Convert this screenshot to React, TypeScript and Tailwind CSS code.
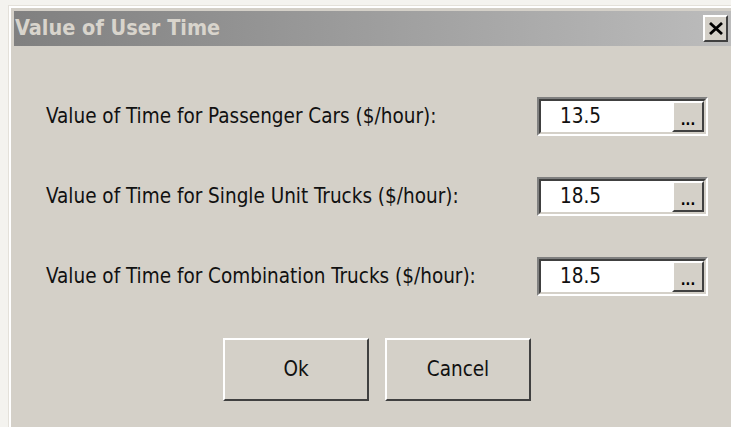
const FONT = "font-['DejaVu_Sans_Condensed','DejaVu_Sans',sans-serif]";

const rows = [
  { label: 'Value of Time for Passenger Cars ($/hour):', value: '13.5' },
  { label: 'Value of Time for Single Unit Trucks ($/hour):', value: '18.5' },
  { label: 'Value of Time for Combination Trucks ($/hour):', value: '18.5' },
];

function ValueField({ value }: { value: string }) {
  return (
    <div className="w-[171px] h-[39px] border-2 border-t-[#808080] border-l-[#808080] border-b-white border-r-white">
      <div className="h-full flex border-2 border-t-[#404040] border-l-[#404040] border-b-[#d4d0c8] border-r-[#d4d0c8] bg-white">
        <div className="flex-1 flex items-center pl-[19px] text-[20.5px] text-[#111]">{value}</div>
        <button className="w-[32px] h-full bg-[#d4d0c8] border-2 border-t-white border-l-white border-b-[#404040] border-r-[#404040] flex items-end justify-center pb-[3px] text-[14px] font-bold leading-none text-black">
          ...
        </button>
      </div>
    </div>
  );
}

function DialogButton({ children }: { children: string }) {
  return (
    <button className="w-[146px] h-[63px] bg-[#d4d0c8] border-2 border-t-white border-l-white border-b-[#404040] border-r-[#404040] text-[20.5px] text-[#111]">
      {children}
    </button>
  );
}

export default function App() {
  return (
    <div className={`w-[731px] h-[427px] overflow-hidden bg-[#f4f3ef] pl-[8px] pt-[5px] ${FONT}`}>
      <div className="h-[440px] border-l border-t border-[#e4e1da]">
        <div className="h-full border-l-2 border-t-2 border-white bg-[#d4d0c8] pl-[3px] pt-[3px]">
          {/* title bar */}
          <div className="h-[35px] flex items-center justify-between pl-[1px] pr-[3px] bg-gradient-to-r from-[#808080] to-[#bcbcbc]">
            <span className="text-[21.5px] font-bold text-[#d8d4cc]">Value of User Time</span>
            <button className="w-[25px] h-[27px] bg-[#d4d0c8] border-2 border-t-white border-l-white border-b-[#404040] border-r-[#404040] flex items-center justify-center">
              <svg width="14" height="13" viewBox="0 0 14 13">
                <path d="M1 1 L13 12 M13 1 L1 12" stroke="#000" strokeWidth="2.8" />
              </svg>
            </button>
          </div>

          <div className="pt-[51px] pl-[32px] flex flex-col gap-[41px]">
            {rows.map((r) => (
              <div key={r.label} className="flex items-center">
                <span className="w-[491px] text-[20.5px] text-[#111]">{r.label}</span>
                <ValueField value={r.value} />
              </div>
            ))}
          </div>

          <div className="mt-[42px] pl-[209px] flex gap-[16px]">
            <DialogButton>Ok</DialogButton>
            <DialogButton>Cancel</DialogButton>
          </div>
        </div>
      </div>
    </div>
  );
}
